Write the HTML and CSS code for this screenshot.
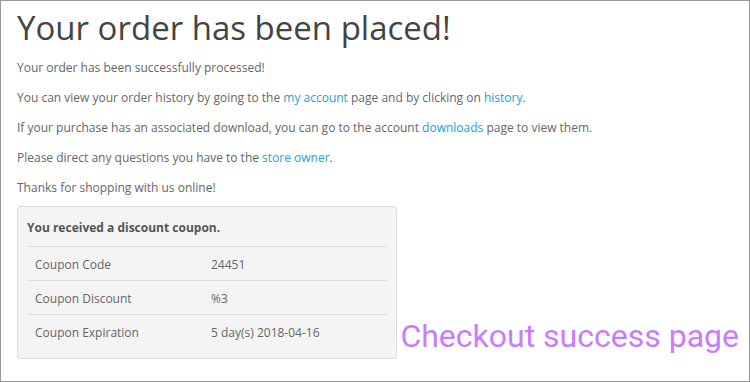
FILE: index.html
```html
<!DOCTYPE html>
<html>
<head>
<meta charset="utf-8">
<link rel="stylesheet" href="styles.css">
</head>
<body>
<div class="page">
  <h1 class="title">Your order has been placed!</h1>
  <p>Your order has been successfully processed!</p>
  <p>You can view your order history by going to the <a href="#">my account</a> page and by clicking on <a href="#">history</a>.</p>
  <p>If your purchase has an associated download, you can go to the account <a href="#">downloads</a> page to view them.</p>
  <p>Please direct any questions you have to the <a href="#">store owner</a>.</p>
  <p>Thanks for shopping with us online!</p>
  <div class="coupon">
    <div class="coupon-title">You received a discount coupon.</div>
    <table class="coupon-table">
      <tr><td class="label">Coupon Code</td><td>24451</td></tr>
      <tr><td class="label">Coupon Discount</td><td>%3</td></tr>
      <tr><td class="label">Coupon Expiration</td><td>5 day(s) 2018-04-16</td></tr>
    </table>
  </div>
  <div class="caption">Checkout success page</div>
</div>
</body>
</html>
```
FILE: styles.css
```css
html, body {
  margin: 0;
  padding: 0;
  background: #fff;
}
.page {
  position: relative;
  box-sizing: border-box;
  width: 750px;
  height: 382px;
  border: 1px solid #999;
  padding: 0 16px;
  font-family: "Open Sans", sans-serif;
  font-size: 12px;
  color: #666;
}
.title {
  font-family: "Open Sans", sans-serif;
  font-weight: 400;
  font-size: 33px;
  line-height: 40px;
  color: #444;
  margin: 7px 0 10px;
}
p {
  margin: 0 0 10px;
  line-height: 20px;
}
p:last-of-type {
  margin-bottom: 8px;
}
a {
  color: #23a1d1;
  text-decoration: none;
}
.coupon {
  width: 380px;
  box-sizing: border-box;
  background: #f4f4f4;
  border: 1px solid #ddd;
  border-radius: 3px;
  padding: 11px 9px 10px;
  margin-top: 0;
}
.coupon-title {
  font-weight: 700;
  color: #555;
  line-height: 20px;
  padding-bottom: 8px;
  border-bottom: 1px solid #ddd;
}
.coupon-table {
  width: 100%;
  border-collapse: collapse;
}
.coupon-table td {
  padding: 8px 8px 6px;
  line-height: 19px;
  color: #666;
}
.coupon-table tr + tr td {
  border-top: 1px solid #ddd;
}
.coupon-table td.label {
  width: 160px;
}
.caption {
  position: absolute;
  right: 10px;
  bottom: 25px;
  font-family: Roboto, sans-serif;
  font-size: 32px;
  color: #c77dff;
  line-height: 40px;
}
```
